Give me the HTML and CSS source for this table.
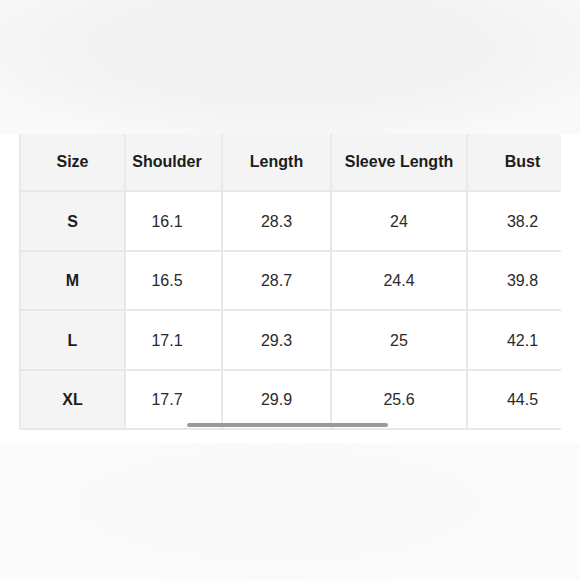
FILE: index.html
```html
<!DOCTYPE html>
<html>
<head>
<meta charset="utf-8">
<link rel="stylesheet" href="styles.css">
</head>
<body>
<div class="band-top"></div>
<div class="wrap">
  <div class="scroller">
    <table class="sizes">
      <colgroup>
        <col class="c1"><col class="c2"><col class="c3"><col class="c4"><col class="c5">
      </colgroup>
      <tr class="head">
        <th>Size</th><th class="sh">Shoulder</th><th>Length</th><th>Sleeve Length</th><th>Bust</th>
      </tr>
      <tr class="r1"><th>S</th><td class="sh">16.1</td><td>28.3</td><td>24</td><td>38.2</td></tr>
      <tr class="r2"><th>M</th><td class="sh">16.5</td><td>28.7</td><td>24.4</td><td>39.8</td></tr>
      <tr class="r1"><th>L</th><td class="sh">17.1</td><td>29.3</td><td>25</td><td>42.1</td></tr>
      <tr class="r2"><th>XL</th><td class="sh">17.7</td><td>29.9</td><td>25.6</td><td>44.5</td></tr>
    </table>
  </div>
  <div class="thumb"></div>
</div>
<div class="band-bottom"></div>
</body>
</html>
```
FILE: styles.css
```css
html, body {
  margin: 0;
  padding: 0;
  background: #ffffff;
}
body {
  width: 580px;
  height: 580px;
  overflow: hidden;
  font-family: "Liberation Sans", Arial, sans-serif;
}
.band-top {
  height: 134px;
  background: radial-gradient(ellipse 60% 75% at 50% 35%, #f1f1f1 0%, #f2f2f2 55%, #f6f6f6 85%, #f9f9f9 100%);
}
.wrap {
  position: relative;
  margin-left: 19px;
  width: 542px;
}
.scroller {
  overflow: hidden;
  width: 542px;
}
.sizes {
  border-collapse: collapse;
  table-layout: fixed;
  width: 558px;
}
.c1 { width: 105px; }
.c2 { width: 97px; }
.c3 { width: 109px; }
.c4 { width: 136px; }
.c5 { width: 111px; }
.sizes th, .sizes td {
  border: 2px solid #e8e8e8;
  text-align: center;
  font-size: 16px;
  padding: 0;
}
.sizes tr:first-child th { border-top: none; }
.sizes th {
  background: #f4f4f4;
  color: #1c1c1c;
  font-weight: bold;
}
.sizes td {
  background: #ffffff;
  color: #2a2a2a;
}
.sizes .sh { padding-right: 13px; }
.head th {
  height: 55px;
  padding-bottom: 1px;
}
.r1 th, .r1 td { height: 57px; padding-top: 1px; }
.r2 th, .r2 td { height: 56px; padding-top: 1px; }
.thumb {
  position: absolute;
  left: 168px;
  bottom: 3px;
  width: 201px;
  height: 4px;
  border-radius: 2px;
  background: #9a9a9a;
}
.band-bottom {
  margin-top: 13px;
  height: 137px;
  background: radial-gradient(ellipse 50% 60% at 48% 45%, #f8f8f8 0%, #f9f9f9 60%, #fbfbfb 100%);
}
```
